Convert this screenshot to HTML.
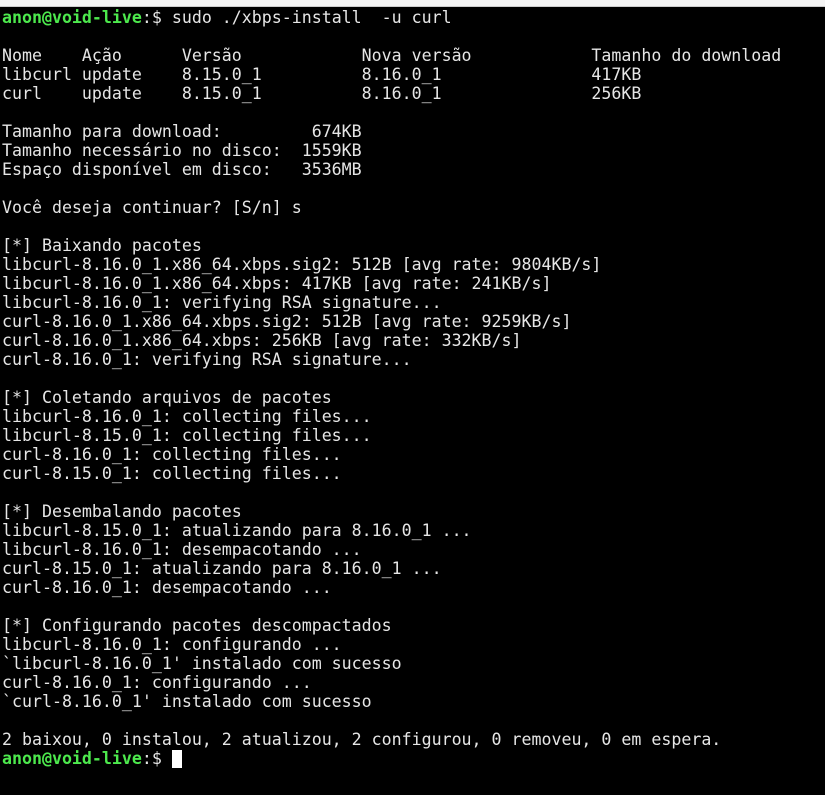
<!DOCTYPE html>
<html><head><meta charset="utf-8"><style>
html,body{margin:0;padding:0;width:825px;height:795px;overflow:hidden;background:#000;}
.top{height:6px;background:#f4f4f4;border-bottom:1px solid #ccc;}
pre{margin:0;padding:1px 0 0 2px;font-family:"DejaVu Sans Mono","Liberation Mono",monospace;font-size:16.6px;line-height:19px;color:#e6e6e6;}
b{color:#4de94d;}
.c{display:inline-block;width:10px;height:18px;background:#fff;vertical-align:-4px;}
</style></head><body><div class="top"></div><pre><b>anon@void-live</b>:$ sudo ./xbps-install  -u curl

Nome    Ação      Versão            Nova versão            Tamanho do download
libcurl update    8.15.0_1          8.16.0_1               417KB
curl    update    8.15.0_1          8.16.0_1               256KB

Tamanho para download:         674KB
Tamanho necessário no disco:  1559KB
Espaço disponível em disco:   3536MB

Você deseja continuar? [S/n] s

[*] Baixando pacotes
libcurl-8.16.0_1.x86_64.xbps.sig2: 512B [avg rate: 9804KB/s]
libcurl-8.16.0_1.x86_64.xbps: 417KB [avg rate: 241KB/s]
libcurl-8.16.0_1: verifying RSA signature...
curl-8.16.0_1.x86_64.xbps.sig2: 512B [avg rate: 9259KB/s]
curl-8.16.0_1.x86_64.xbps: 256KB [avg rate: 332KB/s]
curl-8.16.0_1: verifying RSA signature...

[*] Coletando arquivos de pacotes
libcurl-8.16.0_1: collecting files...
libcurl-8.15.0_1: collecting files...
curl-8.16.0_1: collecting files...
curl-8.15.0_1: collecting files...

[*] Desembalando pacotes
libcurl-8.15.0_1: atualizando para 8.16.0_1 ...
libcurl-8.16.0_1: desempacotando ...
curl-8.15.0_1: atualizando para 8.16.0_1 ...
curl-8.16.0_1: desempacotando ...

[*] Configurando pacotes descompactados
libcurl-8.16.0_1: configurando ...
`libcurl-8.16.0_1' instalado com sucesso
curl-8.16.0_1: configurando ...
`curl-8.16.0_1' instalado com sucesso

2 baixou, 0 instalou, 2 atualizou, 2 configurou, 0 removeu, 0 em espera.
<b>anon@void-live</b>:$ <span class="c"></span></pre></body></html>
